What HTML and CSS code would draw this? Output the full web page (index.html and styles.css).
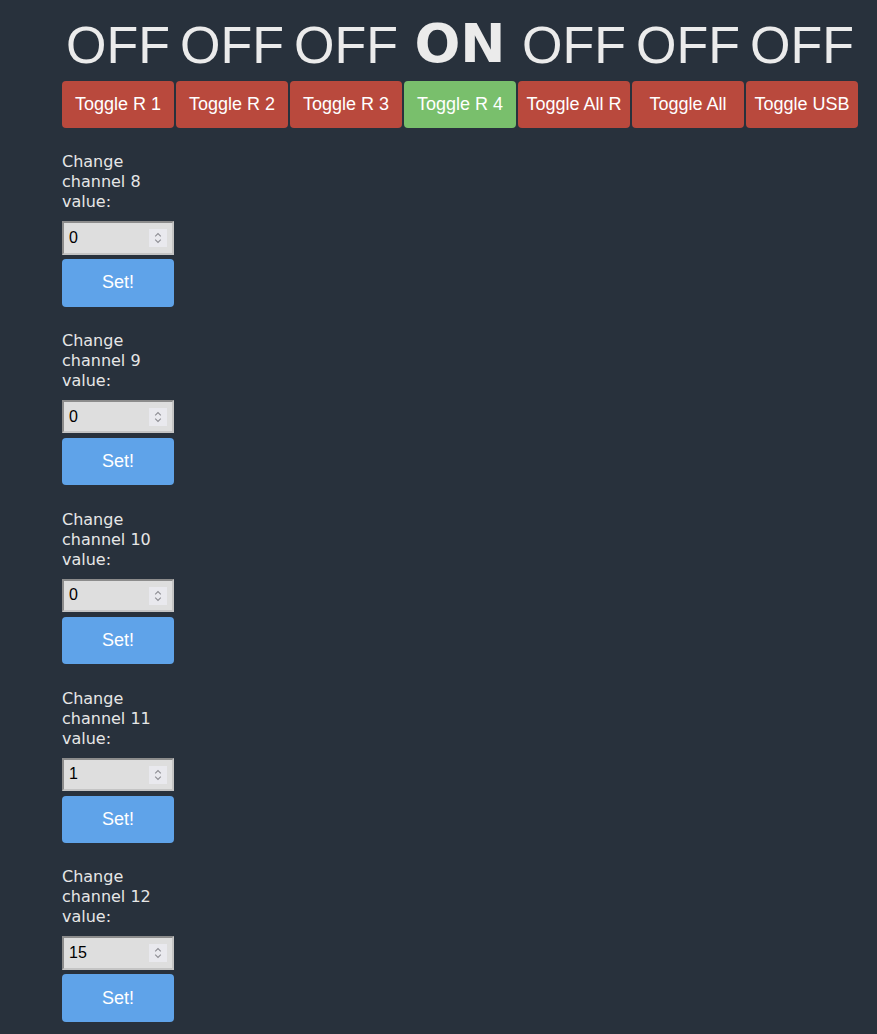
FILE: index.html
```html
<!DOCTYPE html>
<html lang="en">
<head>
<meta charset="utf-8">
<title>Relay control</title>
<link rel="stylesheet" href="styles.css">
</head>
<body>
<main class="page">
  <section class="relays">
    <div class="state">OFF</div>
    <div class="state">OFF</div>
    <div class="state">OFF</div>
    <div class="state state-on">ON</div>
    <div class="state">OFF</div>
    <div class="state">OFF</div>
    <div class="state">OFF</div>
    <button class="toggle">Toggle R 1</button>
    <button class="toggle">Toggle R 2</button>
    <button class="toggle">Toggle R 3</button>
    <button class="toggle toggle-on">Toggle R 4</button>
    <button class="toggle">Toggle All R</button>
    <button class="toggle">Toggle All</button>
    <button class="toggle">Toggle USB</button>
  </section>

  <section class="channels">
    <form class="channel">
      <label class="channel-label">Change channel 8 value:</label>
      <div class="field"><input class="num" type="text" value="0"><span class="spin"><svg width="18" height="18" viewBox="0 0 18 18"><path d="M6.2 7.4 9 4.6 11.8 7.4M6.2 10.6 9 13.4 11.8 10.6" fill="none" stroke="#8d8d93" stroke-width="1.1"/></svg></span></div>
      <button class="set" type="button">Set!</button>
    </form>
    <form class="channel">
      <label class="channel-label">Change channel 9 value:</label>
      <div class="field"><input class="num" type="text" value="0"><span class="spin"><svg width="18" height="18" viewBox="0 0 18 18"><path d="M6.2 7.4 9 4.6 11.8 7.4M6.2 10.6 9 13.4 11.8 10.6" fill="none" stroke="#8d8d93" stroke-width="1.1"/></svg></span></div>
      <button class="set" type="button">Set!</button>
    </form>
    <form class="channel">
      <label class="channel-label">Change channel 10 value:</label>
      <div class="field"><input class="num" type="text" value="0"><span class="spin"><svg width="18" height="18" viewBox="0 0 18 18"><path d="M6.2 7.4 9 4.6 11.8 7.4M6.2 10.6 9 13.4 11.8 10.6" fill="none" stroke="#8d8d93" stroke-width="1.1"/></svg></span></div>
      <button class="set" type="button">Set!</button>
    </form>
    <form class="channel">
      <label class="channel-label">Change channel 11 value:</label>
      <div class="field"><input class="num" type="text" value="1"><span class="spin"><svg width="18" height="18" viewBox="0 0 18 18"><path d="M6.2 7.4 9 4.6 11.8 7.4M6.2 10.6 9 13.4 11.8 10.6" fill="none" stroke="#8d8d93" stroke-width="1.1"/></svg></span></div>
      <button class="set" type="button">Set!</button>
    </form>
    <form class="channel">
      <label class="channel-label">Change channel 12 value:</label>
      <div class="field"><input class="num" type="text" value="15"><span class="spin"><svg width="18" height="18" viewBox="0 0 18 18"><path d="M6.2 7.4 9 4.6 11.8 7.4M6.2 10.6 9 13.4 11.8 10.6" fill="none" stroke="#8d8d93" stroke-width="1.1"/></svg></span></div>
      <button class="set" type="button">Set!</button>
    </form>
  </section>
</main>
</body>
</html>
```

FILE: styles.css
```css
html, body {
  margin: 0;
  padding: 0;
  background: #28313c;
}

.page {
  padding: 14px 0 0 62px;
  font-family: "Liberation Sans", Arial, sans-serif;
}

.relays {
  display: grid;
  grid-template-columns: repeat(7, 112px);
  column-gap: 2px;
  row-gap: 7px;
}

.state {
  height: 60px;
  line-height: 62px;
  font-size: 52px;
  color: #ebebeb;
  text-align: center;
  white-space: nowrap;
}

.state-on {
  line-height: 60px;
  font-size: 54px;
  font-family: "DejaVu Sans", Verdana, sans-serif;
  font-weight: bold;
}

.toggle {
  height: 47px;
  margin: 0;
  padding: 0;
  border: none;
  border-radius: 4px;
  background: #b9493d;
  color: #ffffff;
  font-family: "Liberation Sans", Arial, sans-serif;
  font-size: 18px;
  white-space: nowrap;
}

.toggle-on {
  background: #79bf6c;
}

.channels {
  display: flex;
  flex-direction: column;
  width: 112px;
  padding-top: 24px;
}

.channel {
  display: flex;
  flex-direction: column;
  margin: 0 0 24.35px;
}

.channel-label {
  font-family: "DejaVu Sans", Verdana, sans-serif;
  font-size: 16px;
  line-height: 20px;
  color: #e6e6e6;
}

.field {
  position: relative;
  margin-top: 9px;
  height: 33.5px;
}

.num {
  box-sizing: border-box;
  width: 112px;
  height: 33.5px;
  margin: 0;
  padding: 0 0 0 5px;
  border: 2px solid;
  border-color: #8c8c8c #c4c4c4 #c4c4c4 #8c8c8c;
  background: #dedede;
  color: #000;
  font-family: "Liberation Sans", Arial, sans-serif;
  font-size: 16px;
  outline: none;
}

.spin {
  position: absolute;
  top: 8px;
  right: 7px;
  width: 18px;
  height: 18px;
  background: #e9e9ee;
}

.spin svg {
  display: block;
}

.set {
  height: 47.5px;
  margin: 4.5px 0 0;
  padding: 0;
  border: none;
  border-radius: 4px;
  background: #5fa3e9;
  color: #ffffff;
  font-family: "Liberation Sans", Arial, sans-serif;
  font-size: 18px;
}
```
